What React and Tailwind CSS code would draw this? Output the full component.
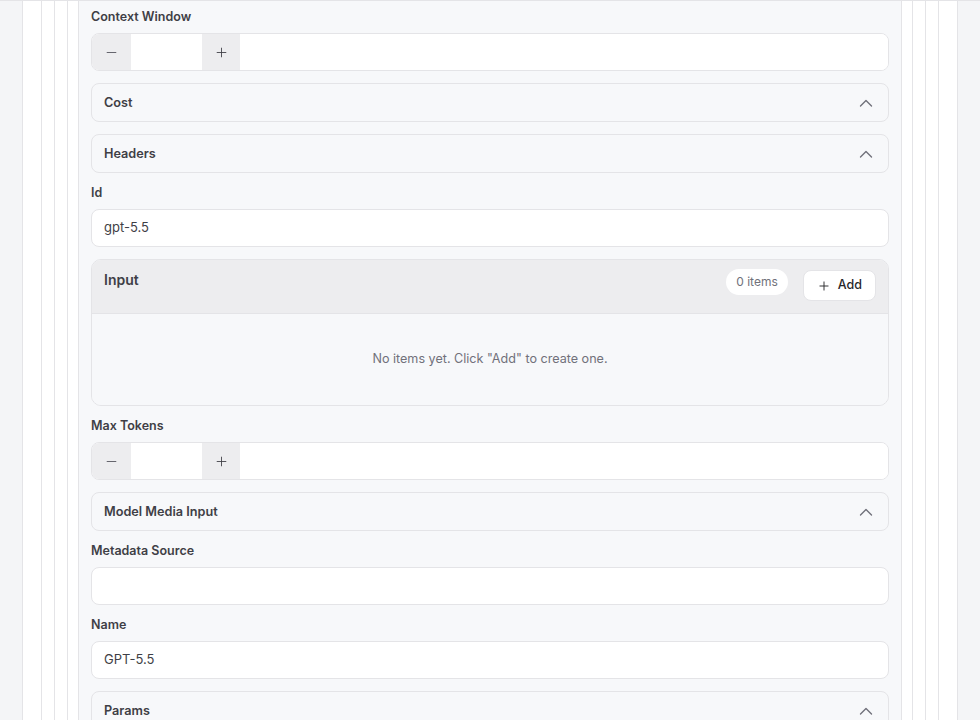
import React from "react";
import { Minus, Plus } from "lucide-react";

const font = { fontFamily: "Inter, 'Noto Sans', 'Liberation Sans', sans-serif" };

function Label({ children }) {
  return (
    <div className="text-[12.5px] leading-4 font-semibold text-[#3f3f46] mb-2">{children}</div>
  );
}

function Chevron() {
  return (
    <svg width="14" height="8" viewBox="0 0 14 8" className="mr-[3px] text-[#71717a]" fill="none">
      <polyline points="1.5,7 7,1.5 12.5,7" stroke="currentColor" strokeWidth="1.4" strokeLinecap="round" strokeLinejoin="round" />
    </svg>
  );
}

function NumberField({ label }) {
  return (
    <div className="shrink-0">
      <Label>{label}</Label>
      <div className="flex h-[38px] rounded-lg border border-[#e4e4e7] bg-white overflow-hidden">
        <div className="w-[39px] bg-[#ededef] flex items-center justify-center text-[#52525b]">
          <Minus size={15} strokeWidth={1.4} />
        </div>
        <div className="w-[71px] bg-white" />
        <div className="w-[38px] bg-[#ededef] flex items-center justify-center text-[#3f3f46]">
          <Plus size={15} strokeWidth={1.4} />
        </div>
        <div className="flex-1 bg-white" />
      </div>
    </div>
  );
}

function TextField({ label, value }) {
  return (
    <div className="shrink-0">
      <Label>{label}</Label>
      <div className="h-[38px] rounded-lg border border-[#e4e4e7] bg-white px-3 flex items-center text-[13px] text-[#3f3f46]">
        {value}
      </div>
    </div>
  );
}

function Accordion({ title }) {
  return (
    <div className="shrink-0 h-[39px] rounded-lg border border-[#e4e4e7] bg-[#f7f8fa] px-3 flex items-center justify-between">
      <span className="text-[12.7px] font-semibold text-[#3f3f46]">{title}</span>
      <Chevron />
    </div>
  );
}

function ArrayCard() {
  return (
    <div className="shrink-0 rounded-[10px] border border-[#e4e4e7] overflow-hidden">
      <div className="h-[54px] bg-[#ededef] border-b border-[#e4e4e7] px-3 pt-[9px] flex items-start justify-between">
        <div className="mt-[1px] text-[14px] leading-5 font-semibold text-[#3f3f46]">Input</div>
        <div className="flex items-start gap-[15px]">
          <div className="h-[26px] px-2.5 rounded-full bg-white flex items-center text-[12px] text-[#71717a]">
            0 items
          </div>
          <div className="mt-[1px] h-[31px] px-[13px] rounded-lg border border-[#e4e4e7] bg-white flex items-center gap-[7px] text-[12.5px] font-medium text-[#27272a]">
            <Plus size={14} strokeWidth={1.6} />
            <span>Add</span>
          </div>
        </div>
      </div>
      <div className="h-[91px] bg-[#f7f8fa] flex items-center justify-center text-[12.6px] text-[#71717a]">
        No items yet. Click "Add" to create one.
      </div>
    </div>
  );
}

export default function App() {
  return (
    <div className="h-[720px] overflow-hidden bg-[#f4f5f7] border-t border-[#e4e4e7]" style={font}>
      <div className="mx-[22px] h-full border-x border-[#e4e4e7] bg-white px-[18px]">
        <div className="h-full border-x border-[#e4e4e7] bg-white px-3">
          <div className="h-full border-x border-[#e4e4e7] bg-white px-3">
            <div className="h-full border-x border-[#e4e4e7] bg-white px-[10px]">
              <div className="h-full border-x border-[#e4e4e7] bg-[#f7f8fa] px-3 pt-[8px] flex flex-col gap-3">
                <NumberField label="Context Window" />
                <Accordion title="Cost" />
                <Accordion title="Headers" />
                <TextField label="Id" value="gpt-5.5" />
                <ArrayCard />
                <NumberField label="Max Tokens" />
                <Accordion title="Model Media Input" />
                <TextField label="Metadata Source" value="" />
                <TextField label="Name" value="GPT-5.5" />
                <Accordion title="Params" />
              </div>
            </div>
          </div>
        </div>
      </div>
    </div>
  );
}
